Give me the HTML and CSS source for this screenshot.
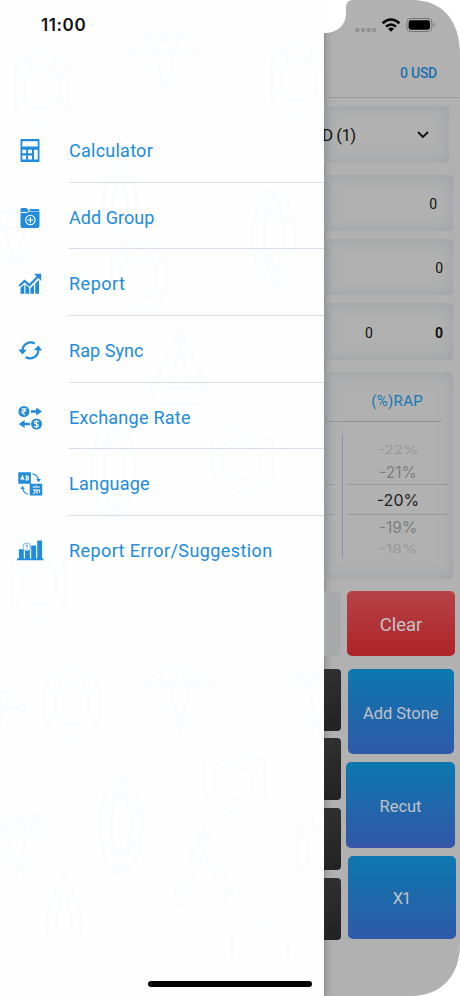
FILE: index.html
```html
<!DOCTYPE html>
<html lang="en">
<head>
<meta charset="utf-8">
<title>Menu</title>
<link rel="stylesheet" href="styles.css">
</head>
<body>
<div class="screen">
  <aside class="drawer">
    <svg class="gems" viewBox="0 0 324 996" fill="none" stroke="#fafcfe" stroke-width="3.5">
      <defs>
        <g id="brilliant"><path d="M0 18L14 2H54L68 18L35 58ZM0 18H68M14 2L24 18L35 58L46 18L54 2M24 18L35 2L46 18"/></g>
        <g id="cushion"><path d="M14 2H40L54 16V56L42 70H12L0 56V16ZM16 18H38L44 28V48L36 56H18L10 48V28ZM14 2L16 18M40 2L38 18M0 16L10 28M54 16L44 28M0 56L10 48M54 56L44 48"/></g>
        <g id="oval"><ellipse cx="22" cy="48" rx="21" ry="47"/><ellipse cx="22" cy="48" rx="10" ry="29"/><path d="M22 1L14 26L2 36M22 1L30 26L42 36M22 95L14 70L2 60M22 95L30 70L42 60"/></g>
        <g id="pear"><path d="M20 0C23 20 40 40 38 60C34 84 6 84 2 60C0 40 17 20 20 0ZM20 20C22 34 29 46 28 57C25 68 15 68 12 57C11 46 18 34 20 20Z"/></g>
        <g id="trillion"><path d="M30 0L58 62L50 74H8L0 62ZM30 22L44 58H16ZM30 0V22M0 62L16 58M58 62L44 58"/></g>
        <g id="hex"><path d="M18 0L62 14L64 50L34 68L2 48V14ZM20 12L50 22V44L32 54L12 42V20Z"/></g>
      </defs>
      <use href="#brilliant" x="130" y="32"/><use href="#cushion" x="15" y="52"/>
      <use href="#cushion" x="272" y="44"/><use href="#pear" x="100" y="152"/>
      <use href="#oval" x="252" y="190"/><use href="#brilliant" x="-20" y="210"/>
      <use href="#cushion" x="112" y="240"/><use href="#trillion" x="150" y="330"/>
      <use href="#oval" x="92" y="420"/><use href="#hex" x="210" y="428"/>
      <use href="#cushion" x="12" y="548"/><use href="#brilliant" x="-42" y="690"/>
      <use href="#cushion" x="45" y="668"/><use href="#brilliant" x="145" y="668"/>
      <use href="#brilliant" x="284" y="670"/><use href="#hex" x="202" y="748"/>
      <use href="#oval" x="99" y="778"/><use href="#brilliant" x="-18" y="814"/>
      <use href="#trillion" x="174" y="830"/><use href="#pear" x="44" y="868"/>
      <use href="#cushion" x="298" y="812"/>
      <path d="M232 958V938L248 926H276L288 942V958"/>
    </svg>
    <div class="time">11:00</div>
    <nav class="menu">
      <a class="item"><svg class="icon" viewBox="0 0 28 28"><path fill-rule="evenodd" d="M5.5 2h17q1 0 1 1v21q0 1-1 1h-17q-1 0-1-1V3q0-1 1-1zM6.3 4.3v5.2h15.4V4.3zM6.3 12.8v3.4h3.9v-3.4zM12 12.8v3.4h4v-3.4zM6.3 18.6v3.9h3.9v-3.9zM12 18.6v3.9h4v-3.9zM18 12.8v9.7h3.7v-9.7z"/></svg><span class="label calc">Calculator</span></a>
      <a class="item"><svg class="icon" viewBox="0 0 28 28"><path d="M4.5 8V5.5Q4.5 4 6 4h4.5l3 3.5h10V22q0 2-2 2h-15q-2 0-2-2z"/><path d="M13 5h9q1.5 0 1.5 2h-8.8z"/><path d="M4.5 8.4h7l2-1.8" class="cut"/><circle cx="14.4" cy="16" r="4.7" class="line-cut"/><path d="M14.4 13v6m-3-3h6" class="line-cut"/></svg><span class="label group">Add Group</span></a>
      <a class="item"><svg class="icon" viewBox="0 0 28 28"><path d="M4.5 18l3.8-3.5v9.2H4.5zM9.4 14.5l3.8 3.3v5.9H9.4zM14.4 18.2l3.6-3.6v9.1h-3.6zM19.2 13.4l3.8-3.7v14h-3.8z"/><path d="M3.3 16l5.2-5 4.9 4.2L22.5 6" fill="none" stroke="#218bdc" stroke-width="2.3"/><path d="M18.2 3.8h7v7.1z"/></svg><span class="label report">Report</span></a>
      <a class="item"><svg class="icon" viewBox="0 0 28 28"><path d="M18.8 6.6A8.2 8.2 0 0 0 6.5 13.5M9.6 20A8.2 8.2 0 0 0 22.3 12.8" fill="none" stroke="#218bdc" stroke-width="2.2"/><path d="M2.4 12.5l8.3.3-4.3 4.7zM26 13.5l-8.2-.4 4.6-4.7z"/></svg><span class="label sync">Rap Sync</span></a>
      <a class="item"><svg class="icon" viewBox="0 0 28 28"><circle cx="7.9" cy="7.5" r="5.5"/><circle cx="20.5" cy="20" r="5.5"/><path d="M15 6.2h5.2V3.4l5.8 4.1-5.8 4.1V8.8H15zM14 18.8H8.6V16l-5.8 4 5.8 4v-2.8H14z"/><path d="M5.6 4.8h4.8M5.6 6.7h4.8M6 4.8c3.8 0 3.8 3.6 0 3.6l3 2.6M22.6 18c-1-1.6-4.2-1.1-4.2.4 0 2 4.2 1.2 4.2 3.2 0 1.7-3.4 2-4.4.3M20.5 16v8" class="line-cut"/></svg><span class="label rate">Exchange Rate</span></a>
      <a class="item"><svg class="icon" viewBox="0 0 28 28"><path d="M2.3 2.3h12.6v11.5H2.3zM13.7 13.8h12.5v11.6H13.7z"/><path d="M4.8 10l1.6-4L8 10M5.3 8.8h2.2M10.2 6h1.5q1.5 1 0 2 1.8 1 0 2h-1.5zM16.6 17h7.2M20 15.5V17M17 20h6.5v2.8M18.8 19.8v3l-1.8 1M21 20v4" class="line-cut"/><path d="M16.5 3.8q5 .7 6 6M12 24q-4.5-.8-5.4-6" fill="none" stroke="#218bdc" stroke-width="1.2"/><path d="M20.2 9h4.8l-2.5 3.2zM4.4 19h4.4l-2.3-3.2z"/></svg><span class="label lang">Language</span></a>
      <a class="item last"><svg class="icon" viewBox="0 0 28 28"><path d="M1 21.6h26.4v1.7H1zM2.9 12.2h4.9v10H2.9zM9 12.5h4.9v9.7H9zM15.2 8.6h4.9v13.6h-4.9zM21.2 3.6h4.9v18.6h-4.9z"/><circle cx="10.8" cy="10" r="4" fill="#fff" stroke="#218bdc" stroke-width=".6"/><path d="M9.5 9.2q.3-1.4 1.5-1.2 1.5.7 0 2v.8M10.9 11.7v.8" fill="none" stroke="#218bdc" stroke-width=".8"/></svg><span class="label error">Report Error/Suggestion</span></a>
    </nav>
    <div class="home-bar"></div>
  </aside>

  <main class="app">
    <div class="status">
      <svg width="82" height="20" viewBox="0 0 82 20">
        <g fill="#929292"><rect x=".3" y="14" width="4" height="4" rx="1"/><rect x="6" y="14" width="4" height="4" rx="1"/><rect x="11.6" y="14" width="4" height="4" rx="1"/><rect x="17" y="14" width="4" height="4" rx="1"/></g>
        <g fill="none" stroke="#000" stroke-width="2.5"><path d="M27.6 9.2Q36 1.7 44.4 9.2M31 12.6Q36 8.3 41 12.6"/></g><path d="M33 14.7q3-2.2 6 0l-3 3z"/>
        <rect x="51.8" y="4.5" width="25" height="13" rx="4" fill="none" stroke="#777"/><rect x="53.6" y="6.3" width="21.4" height="9.4" rx="2.4"/><path d="M78.5 8.8q2.5 2.2 0 4.4z" fill="#777"/>
      </svg>
    </div>
    <header class="balance">0 USD</header>
    <section class="panel select"><span>D (1)</span><svg width="12" height="8" viewBox="0 0 12 8"><path d="M1 1l5 5 5-5" fill="none" stroke="#111" stroke-width="1.8"/></svg></section>
    <section class="panel value v1">0</section>
    <section class="panel value v2">0</section>
    <section class="panel value v3"><span>0</span><b>0</b></section>
    <section class="panel rap">
      <h2>(%)RAP</h2>
      <div class="wheels">
        <div class="stub"><i></i></div>
        <div class="wheel">
          <span class="far">-22%</span>
          <span class="near">-21%</span>
          <span class="now">-20%</span>
          <span class="near">-19%</span>
          <span class="far">-18%</span>
        </div>
      </div>
    </section>
    <div class="keys">
      <div class="left">
        <div class="blank"></div>
        <div class="dark"></div><div class="dark"></div><div class="dark"></div><div class="dark"></div>
      </div>
      <div class="right">
        <button class="btn clear">Clear</button>
        <button class="btn add">Add Stone</button>
        <button class="btn recut">Recut</button>
        <button class="btn times">X1</button>
      </div>
    </div>
  </main>
</div>
</body>
</html>
```
FILE: styles.css
```css
* { box-sizing: border-box; }
body { margin: 0; background: #fff; font-family: Roboto, "Liberation Sans", sans-serif; }
.screen { display: flex; width: 460px; height: 996px; overflow: hidden; }

.drawer { position: relative; z-index: 1; width: 324px; display: flex; flex-direction: column; background: #fefefe; }
.gems { position: absolute; inset: 0; width: 324px; height: 996px; z-index: -1; }
.time { height: 116px; padding: 15px 0 0 41px; font: 600 17px/21px Inter, sans-serif; color: #111; letter-spacing: .6px; }
.menu { display: flex; flex-direction: column; }
.item { display: flex; align-items: stretch; height: 66.7px; }
.icon { width: 28px; height: 28px; margin: 21px 23px 0 16px; flex: none; fill: #218bdc; }
.cut { fill: none; stroke: #fff; stroke-width: 1; }
.line-cut { fill: none; stroke: #fff; stroke-width: 1.1; }
.label { flex: 1; margin-left: 2px; padding-top: 3px; line-height: 63px; font-size: 18px; color: #218bdc; border-bottom: 1.5px solid #d8daed; white-space: nowrap; letter-spacing: .25px; }
.group, .sync { letter-spacing: .05px; }
.report { letter-spacing: .5px; }
.error { letter-spacing: .41px; }
.last .label { border: 0; }
.home-bar { width: 164px; height: 6px; margin: auto 0 9px 148px; border-radius: 3px; background: #000; }

.app { width: 136px; height: 996px; display: flex; flex-direction: column; color: #111;
  background: linear-gradient(90deg, #8e8f90 0, #a5a5a5 3px, #b1b1b1 9px);
  clip-path: path("M0 33C14 33 22 25 22 13V8C22 3 24 0 29 0H88C118 0 136 20 136 54V944C136 975 118 996 87 996H0Z"); }
.status { height: 48px; padding: 14px 0 0 31px; }
.balance { height: 50px; padding: 16px 23px 0 0; text-align: right; font-size: 14px; line-height: 18px; font-weight: 500; color: #1b70ad; border-bottom: 1px solid #999; letter-spacing: -.25px; }
.panel { border-radius: 0 4px 4px 0; background: linear-gradient(90deg, #929395 0, transparent 5px); box-shadow: inset 0 0 16px #9da0a6; }
.select { height: 57px; width: 125px; margin-top: 8px; padding: 0 20.5px 0 0; display: flex; align-items: center; justify-content: space-between; font-size: 17px; letter-spacing: -.6px; }
.select span { margin-left: -2px; }
.value { width: 129px; height: 56px; display: flex; align-items: center; justify-content: flex-end; font-size: 14px; padding-top: 2px; }
.v1 { margin-top: 12px; padding-right: 16px; }
.v2 { margin-top: 8px; padding-right: 10px; }
.v3 { margin-top: 8px; padding-right: 10px; height: 57px; gap: 62px; }
.rap { width: 129px; height: 207px; margin-top: 12px; }
.rap h2 { margin: 0 12px 0 0; height: 50px; padding: 19px 18px 0 0; text-align: right; font-size: 15px; line-height: 20px; font-weight: 400; color: #1779b5; border-bottom: 1px solid #8f9092; letter-spacing: .3px; }
.wheels { display: flex; height: 124px; margin-top: 12px; }
.stub { width: 19px; border-right: 1.5px solid #8a90a5; padding: 50px 6px 0 0; }
.stub i { display: block; height: 31px; border: solid #989898; border-width: 1px 0; }
.wheel { width: 100px; margin-left: 5px; padding-top: 6px; display: flex; flex-direction: column; align-items: center; font-family: Inter, sans-serif; }
.wheel .far { height: 20px; line-height: 20px; font-size: 15.5px; color: #999; transform: scaleY(.75); }
.wheel .near { height: 24px; line-height: 26px; font-size: 15.5px; color: #7d7d7d; transform: scaleY(.98); }
.wheel .now { width: 100px; height: 31px; line-height: 30px; font-size: 16px; text-align: center; color: #222; border: solid #989898; border-width: 1px 0; }

.keys { display: flex; margin-top: 12px; }
.left { width: 17px; display: flex; flex-direction: column; gap: 7.7px; }
.blank { height: 65px; margin-bottom: 5px; border-radius: 0 5px 5px 0; background: #a8a9ab; }
.dark { height: 62px; border-radius: 0 4px 4px 0; background: linear-gradient(160deg, #303030, #222); }
.right { width: 110px; margin-left: 5px; display: flex; flex-direction: column; }
.btn { border: 0; padding: 0; border-radius: 5px; font: 400 16.5px Roboto, sans-serif; color: #c0c3c8; background: linear-gradient(#0c78ae, #2f59a9); letter-spacing: -.05px; }
.clear { width: 108px; height: 65px; margin-left: 1px; font-size: 18.5px; padding-top: 2px; background: linear-gradient(#b64347, #ad2429); }
.add { width: 106.5px; height: 85px; margin: 13px 0 0 1.5px; padding-top: 3px; }
.recut { width: 109px; height: 86px; margin-top: 8px; padding-top: 3px; background: linear-gradient(#0c78ae, #2f59a9 92%, #3852a4); }
.times { width: 108px; height: 83px; margin: 8px 0 0 1.5px; padding-top: 2px; letter-spacing: -1px; }
```
